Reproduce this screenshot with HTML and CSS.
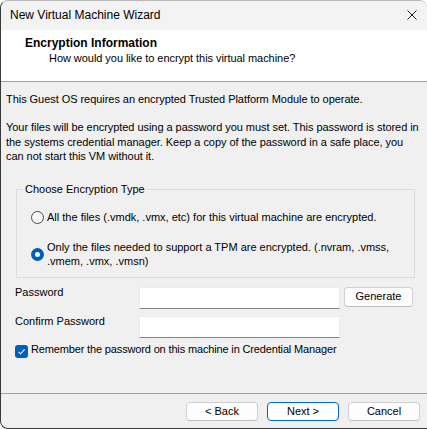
FILE: index.html
```html
<!DOCTYPE html>
<html>
<head>
<meta charset="utf-8">
<title>New Virtual Machine Wizard</title>
<link rel="stylesheet" href="styles.css">
</head>
<body>
<div class="window">
  <div class="titlebar">
    <span class="title">New Virtual Machine Wizard</span>
    <svg class="close" width="10" height="10" viewBox="0 0 10 10"><path d="M0.5 0.5L9.5 9.5M9.5 0.5L0.5 9.5" stroke="#1a1a1a" stroke-width="1" fill="none"/></svg>
  </div>
  <div class="header">
    <div class="h-title">Encryption Information</div>
    <div class="h-sub">How would you like to encrypt this virtual machine?</div>
  </div>
  <div class="content">
    <p class="p1">This Guest OS requires an encrypted Trusted Platform Module to operate.</p>
    <p class="p2">Your files will be encrypted using a password you must set. This password is stored in<br>the systems credential manager. Keep a copy of the password in a safe place, you<br>can not start this VM without it.</p>
    <fieldset class="group">
      <legend>Choose Encryption Type</legend>
      <label class="radio r1"><input type="radio" name="enc"><span>All the files (.vmdk, .vmx, etc) for this virtual machine are encrypted.</span></label>
      <label class="radio r2"><input type="radio" name="enc" checked><span>Only the files needed to support a TPM are encrypted. (.nvram, .vmss,<br>.vmem, .vmx, .vmsn)</span></label>
    </fieldset>
    <div class="row pw">
      <label class="lbl">Password</label>
      <input class="field" type="password">
      <button class="btn gen">Generate</button>
    </div>
    <div class="row cpw">
      <label class="lbl">Confirm Password</label>
      <input class="field" type="password">
    </div>
    <label class="check">
      <span class="box"><svg width="13" height="13" viewBox="0 0 13 13"><path d="M3.5 6.8L5.6 8.8L9.6 4.4" stroke="#fff" stroke-width="1.1" fill="none"/></svg></span>
      <span class="check-text">Remember the password on this machine in Credential Manager</span>
    </label>
  </div>
  <div class="footer">
    <button class="btn">&lt; Back</button>
    <button class="btn default">Next &gt;</button>
    <button class="btn">Cancel</button>
  </div>
</div>
</body>
</html>
```

FILE: styles.css
```css
* { box-sizing: border-box; }
html, body { margin: 0; padding: 0; background: #fff; }
body {
  font-family: "Liberation Sans", Arial, sans-serif;
  font-size: 11px;
  line-height: 15px;
  color: #000;
}
.window {
  width: 427px;
  height: 429px;
  display: flex;
  flex-direction: column;
  background: #f0f0f0;
  border-top: 1px solid #b8b8b8;
  border-left: 1px solid #3a3a3a;
  border-bottom: 1px solid #3a3a3a;
  border-radius: 8px 8px 0 8px;
  overflow: hidden;
}
.titlebar {
  height: 29px;
  flex: none;
  display: flex;
  align-items: center;
  justify-content: space-between;
  padding: 0 10px 1px 9px;
  background: #f3f3f3;
  font-size: 12px;
}
.close { display: block; }
.header {
  height: 52px;
  flex: none;
  background: #fff;
  border-bottom: 1px solid #a0a0a0;
  padding: 6px 0 0 24px;
}
.h-title { font-weight: bold; font-size: 12px; }
.h-sub { margin-left: 24px; letter-spacing: -0.05px; }
.content {
  flex: 1;
  padding: 10px 0 0 5px;
}
.p1 { margin: 0; letter-spacing: -0.05px; }
.p2 { margin: 13px 0 0; line-height: 14.5px; letter-spacing: -0.05px; }
.group {
  width: 399px;
  margin: 18px 0 0 10px;
  padding: 0 6px 8px;
  border: 1px solid #dcdcdc;
}
.group legend { padding: 0 2px; }
.radio {
  display: flex;
  align-items: center;
  margin-left: 8px;
}
.radio input {
  appearance: none;
  -webkit-appearance: none;
  width: 13px;
  height: 13px;
  margin: 0 3px 0 0;
  border: 1px solid #4a4a4a;
  border-radius: 50%;
  background: #f7f7f7;
  flex: none;
}
.radio input:checked {
  border: none;
  background: #fff;
  box-shadow: inset 0 0 0 4px #005fb8;
}
.r1 { margin-top: 13px; }
.r2 { margin-top: 15px; line-height: 14.5px; }
.row {
  display: flex;
  align-items: flex-start;
  margin-left: 9px;
}
.pw { margin-top: 9px; }
.cpw { margin-top: 7px; }
.lbl { width: 124px; margin-top: -2px; }
.field {
  width: 201px;
  height: 22px;
  margin: 0;
  border: 1px solid #ececec;
  border-bottom: 1px solid #868686;
  background: #fff;
  padding: 0 4px;
  font: inherit;
}
.btn {
  width: 72px;
  height: 19px;
  margin: 0;
  padding: 0;
  border: 1px solid #d0d0d0;
  border-bottom-color: #bdbdbd;
  border-radius: 4px;
  background: #fdfdfd;
  font: inherit;
  color: #000;
}
.gen { width: 69px; height: 20px; margin-left: 4px; }
.default { border-color: #0067c0; }
.check {
  display: flex;
  align-items: flex-start;
  margin: 4px 0 0 9px;
}
.check-text { letter-spacing: -0.15px; }
.box {
  width: 13px;
  height: 13px;
  margin: 3px 3px 0 0;
  border-radius: 3px;
  background: #005fb8;
  flex: none;
}
.box svg { display: block; }
.footer {
  flex: none;
  display: flex;
  justify-content: flex-end;
  gap: 9px;
  padding: 8px 7px 7px 0;
  border-top: 1px solid #a0a0a0;
}
```
